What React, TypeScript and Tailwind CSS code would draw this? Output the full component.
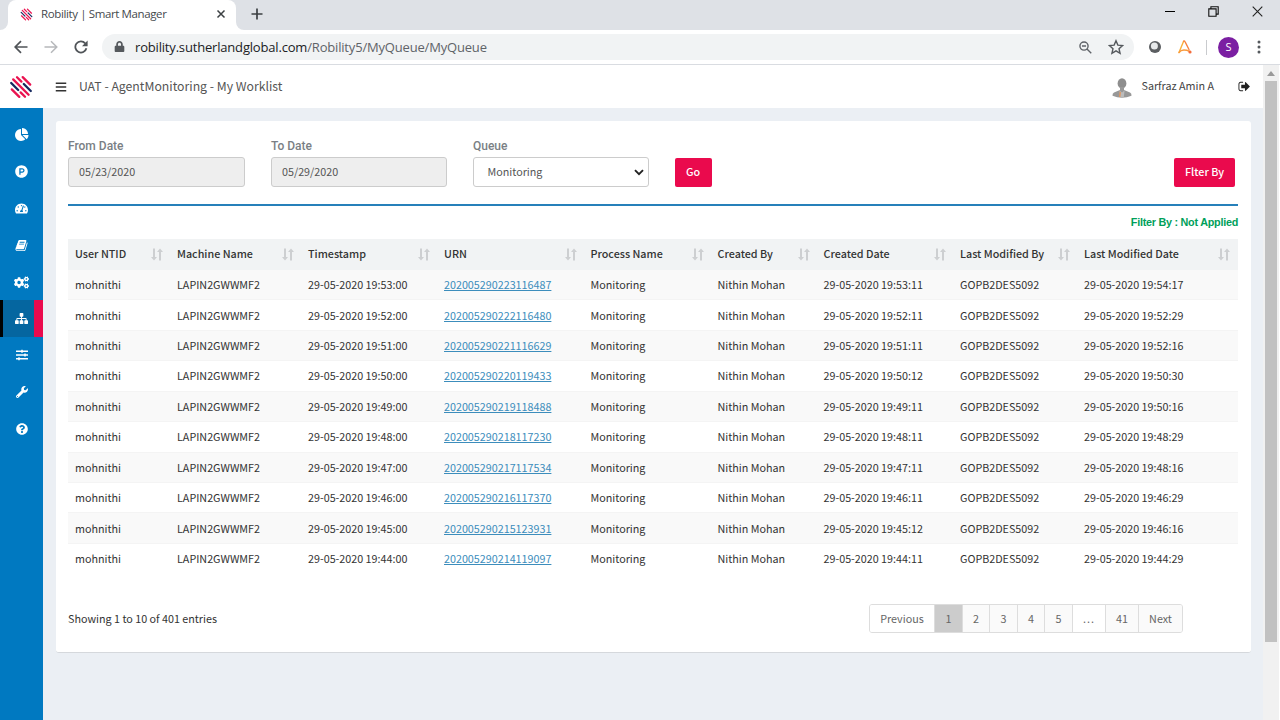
import { clsx } from "clsx";
import {
  FaBars,
  FaCogs,
  FaLock,
  FaProductHunt,
  FaQuestionCircle,
  FaSlidersH,
  FaTachometerAlt,
  FaWrench,
} from "react-icons/fa";

const PIE =
  "M768 890l546 546q-106 108-247.5 168t-298.5 60q-209 0-385.5-103t-279.5-279.5-103-385.5 103-385.5 279.5-279.5 385.5-103v762zm187 6h773q0 157-60 298.5t-168 247.5zm709-128h-768v-768q209 0 385.5 103t279.5 279.5 103 385.5z";
const BOOK =
  "M1703 478q40 57 18 129l-275 906q-19 64-76.5 107.5t-122.5 43.5h-923q-77 0-148.5-53.5t-99.5-131.5q-24-67-2-127 0-4 3-27t4-37q1-8-3-21.5t-3-19.5q2-11 8-21t16.5-23.5 16.5-23.5q23-38 45-91.5t30-91.5q3-10 .5-30t-.5-28q3-11 17-28t17-23q21-36 42-92t25-90q1-9-2.5-32t.5-28q4-13 22-30.5t22-22.5q19-26 42.5-84.5t27.5-96.5q1-8-3-25.5t-2-26.5q2-8 9-18t18-23 17-21q8-12 16.5-30.5t15-35 16-36 19.5-32 26.5-23.5 36-11.5 47.5 5.5l-1 3q38-9 51-9h761q74 0 114 56t18 130l-274 906q-36 119-71.5 153.5t-128.5 34.5h-869q-27 0-38 15-11 16-1 43 24 70 144 70h923q29 0 56-15.5t35-41.5l300-987q7-22 5-57 38 15 59 43zm-1064 2q-4 13 2 22.5t20 9.5h608q13 0 25.5-9.5t16.5-22.5l21-64q4-13-2-22.5t-20-9.5h-608q-13 0-25.5 9.5t-16.5 22.5zm-83 256q-4 13 2 22.5t20 9.5h608q13 0 25.5-9.5t16.5-22.5l21-64q4-13-2-22.5t-20-9.5h-608q-13 0-25.5 9.5t-16.5 22.5z";
const SITEMAP =
  "M1792 1248v320q0 40-28 68t-68 28h-320q-40 0-68-28t-28-68v-320q0-40 28-68t68-28h96v-192h-512v192h96q40 0 68 28t28 68v320q0 40-28 68t-68 28h-320q-40 0-68-28t-28-68v-320q0-40 28-68t68-28h96v-192h-512v192h96q40 0 68 28t28 68v320q0 40-28 68t-68 28h-320q-40 0-68-28t-28-68v-320q0-40 28-68t68-28h96v-192q0-52 38-90t90-38h512v-192h-96q-40 0-68-28t-28-68v-320q0-40 28-68t68-28h320q40 0 68 28t28 68v320q0 40-28 68t-68 28h-96v192h512q52 0 90 38t38 90v192h96q40 0 68 28t28 68z";
const SIGN_OUT =
  "M704 1440q0 4 1 20t.5 26.5-3 23.5-10 19.5-20.5 6.5h-320q-119 0-203.5-84.5t-84.5-203.5v-704q0-119 84.5-203.5t203.5-84.5h320q13 0 22.5 9.5t9.5 22.5q0 4 1 20t.5 26.5-3 23.5-10 19.5-20.5 6.5h-320q-66 0-113 47t-47 113v704q0 66 47 113t113 47h312l11.5 1 11.5 3 8 5.5 7 9 2 13.5zm928-544q0 26-19 45l-544 544q-19 19-45 19t-45-19-19-45v-288h-448q-26 0-45-19t-19-45v-384q0-26 19-45t45-19h448v-288q0-26 19-45t45-19 45 19l544 544q19 19 19 45z";

const Glyph = ({ d, className }: { d: string; className?: string }) => (
  <svg viewBox="0 0 1792 1792" fill="currentColor" className={className}>
    <path d={d} />
  </svg>
);

const columns = [
  "User NTID",
  "Machine Name",
  "Timestamp",
  "URN",
  "Process Name",
  "Created By",
  "Created Date",
  "Last Modified By",
  "Last Modified Date",
];

// [timestamp, urn, created, modified]
const rows = [
  ["19:53:00", "202005290223116487", "19:53:11", "19:54:17"],
  ["19:52:00", "202005290222116480", "19:52:11", "19:52:29"],
  ["19:51:00", "202005290221116629", "19:51:11", "19:52:16"],
  ["19:50:00", "202005290220119433", "19:50:12", "19:50:30"],
  ["19:49:00", "202005290219118488", "19:49:11", "19:50:16"],
  ["19:48:00", "202005290218117230", "19:48:11", "19:48:29"],
  ["19:47:00", "202005290217117534", "19:47:11", "19:48:16"],
  ["19:46:00", "202005290216117370", "19:46:11", "19:46:29"],
  ["19:45:00", "202005290215123931", "19:45:12", "19:46:16"],
  ["19:44:00", "202005290214119097", "19:44:11", "19:44:29"],
];

const gridCols =
  "grid grid-cols-[102px_131px_136px_146.5px_127px_106px_136.5px_124px_160px] items-center";

function Logo({ className }: { className?: string }) {
  return (
    <svg viewBox="0 0 24 24" fill="none" strokeWidth="2.3" strokeLinecap="round" className={className}>
      <path
        stroke="#ea1350"
        d="M13.700 2.100l7.500 7.500M8 2.200l4.400 4.400M4.200 4.400l15.400 15.400M11.600 17.400l4.400 4.400M2.800 14.400l7.500 7.500"
      />
      <path stroke="#16295f" d="M14.800 9l7 7M2.200 8l7 7" />
    </svg>
  );
}

function SortIcon() {
  return (
    <svg viewBox="0 0 12 13" className="mr-[7px] h-[13px] w-3 shrink-0" fill="#cdcfd1">
      <path d="M2 0.5h2v8.600h2L3 12.600 0 9.100h2z" />
      <path d="M8 12.500h2V3.900h2L9 0.400 6 3.900h2z" />
    </svg>
  );
}

function Browser() {
  return (
    <header className="font-['Open_Sans','Noto_Sans',sans-serif]">
      <div className="flex h-[30px] bg-[#dee1e6]">
        <div className="w-2 bg-white">
          <div className="h-full rounded-br-lg bg-[#dee1e6]" />
        </div>
        <div className="flex w-[228px] items-center rounded-t-lg bg-white pr-[10px] pb-[2px] pl-3">
          <Logo className="size-[13px]" />
          <span className="ml-2 text-[11.500px] tracking-[-0.380px] text-[#45494d]">Robility | Smart Manager</span>
          <svg viewBox="0 0 10 10" className="ml-auto size-[10px]" stroke="#3c4043" strokeWidth="1.5">
            <path d="M1.5 1.5l7 7M8.5 1.5l-7 7" />
          </svg>
        </div>
        <div className="w-2 bg-white">
          <div className="h-full rounded-bl-lg bg-[#dee1e6]" />
        </div>
        <svg viewBox="0 0 12 12" className="mt-2 ml-[7px] size-3" stroke="#3c4043" strokeWidth="1.7">
          <path d="M6 0.5v11M0.5 6h11" />
        </svg>
        <div className="ml-auto flex h-[23px] items-center gap-[33px] pr-[17px]">
          <div className="h-px w-[10px] bg-black" />
          <svg viewBox="0 0 11 11" className="size-[11px]" fill="none" stroke="#111" strokeWidth="1.1">
            <path d="M0.8 2.9h7.3v7.3H0.8zM2.9 2.6V0.8h7.3v7.3H8.4" />
          </svg>
          <svg viewBox="0 0 11 11" className="size-[11px]" stroke="#222" strokeWidth="1.1">
            <path d="M0.7 0.7l9.6 9.6M10.3 0.7l-9.6 9.6" />
          </svg>
        </div>
      </div>
      <div className="flex h-[35px] items-center border-b border-[#d9dce1] bg-white pr-[19px] pl-[14px]">
        <svg viewBox="0 0 14 14" className="size-[14px]" fill="none" stroke="#505458" strokeWidth="1.7">
          <path d="M13.5 7H1.5M7 1.2L1.2 7l5.8 5.8" />
        </svg>
        <svg viewBox="0 0 14 14" className="ml-4 size-[14px]" fill="none" stroke="#b6b8bb" strokeWidth="1.5">
          <path d="M0.5 7h12M7 1.2L12.8 7 7 12.8" />
        </svg>
        <svg viewBox="0 0 14 14" className="ml-4 size-[14px]" fill="none" stroke="#505458" strokeWidth="1.8">
          <path d="M12.4 8.3A5.6 5.6 0 1 1 11.2 3.3" />
          <path d="M13.6 0.6v5.6H8z" fill="#505458" stroke="none" />
        </svg>
        <div className="ml-[14px] flex h-[26px] flex-1 items-center rounded-full bg-[#f1f3f4] pr-[10px] pl-3">
          <FaLock className="mb-px size-[11px] text-[#55595d]" />
          <span className="ml-[10px] pt-px text-[13px] tracking-[-0.180px] text-[#202124]">
            robility.sutherlandglobal.com<span className="text-[#5f6368]">/Robility5/MyQueue/MyQueue</span>
          </span>
          <svg viewBox="0 0 14 14" className="ml-auto size-[13px]" fill="none" stroke="#5f6368" strokeWidth="1.5">
            <circle cx="5.4" cy="5.4" r="4.4" />
            <path d="M3.2 5.4h4.4M8.6 8.6l4.600 4.600" />
          </svg>
          <svg viewBox="0 0 24 24" className="ml-4 size-[16px]" fill="none" stroke="#55595d" strokeWidth="2.1">
            <path d="M12 2.6l2.8 6.6 7.1.6-5.4 4.7 1.6 7L12 17.800l-6.100 3.700 1.600-7L2.100 9.800l7.100-.6z" />
          </svg>
        </div>
        <svg viewBox="0 0 12 12" className="ml-[15px] size-3">
          <circle cx="6" cy="6" r="6" fill="#5b5e61" />
          <circle cx="5.4" cy="5" r="3.500" fill="#e8eaeb" />
        </svg>
        <svg viewBox="0 0 14 14" className="ml-[17px] size-[14px]" fill="none" strokeWidth="1.4" strokeLinecap="round">
          <path d="M1 12.500L5.600 1.200" stroke="#fbb03b" />
          <path d="M5.600 1.200Q6.600 0.500 7.200 2L11 9.500" stroke="#f7803c" />
          <path d="M1 12.500Q4 8.200 12 11.500" stroke="#f99a3d" />
          <circle cx="12" cy="12" r="1.600" fill="#f36c3d" />
        </svg>
        <div className="ml-[14px] h-[15px] w-px bg-[#c9cbce]" />
        <div className="ml-[11px] flex size-[21px] items-center justify-center rounded-full bg-[#7b1fa2] text-[11px] text-white">
          S
        </div>
        <svg viewBox="0 0 4 14" className="ml-[18px] h-[14px] w-1" fill="#55595d">
          <circle cx="2" cy="2" r="1.500" />
          <circle cx="2" cy="7" r="1.500" />
          <circle cx="2" cy="12" r="1.500" />
        </svg>
      </div>
    </header>
  );
}

function Topbar() {
  return (
    <div className="flex h-[43px] items-center bg-white pr-[12px] pl-[9px]">
      <Logo className="size-6" />
      <FaBars className="ml-[22px] size-3 text-[#333]" />
      <span className="ml-3 text-[12.250px] text-[#555]">UAT - AgentMonitoring - My Worklist</span>
      <svg viewBox="0 0 20 20" className="mt-[2px] ml-auto size-5">
        <ellipse cx="10" cy="5.400" rx="4.400" ry="5.200" fill="#8e8e8e" />
        <path d="M8 9h4v3l6 2.400q1.800 1 1.500 3.300Q15 19.800 10 19.800T0.500 17.700Q0.300 15.300 2 14.400L8 12z" fill="#989898" />
        <path d="M7.400 12.400L10 14.500l2.600-2.100-.8 6.800H8.200z" fill="#bbb" />
        <path d="M7.600 13.500l1.400.8-.6 4.800H7z" fill="#e0955f" />
      </svg>
      <span className="ml-[9px] text-[10.750px] text-[#444]">Sarfraz Amin A</span>
      <Glyph d={SIGN_OUT} className="ml-[24px] size-[13px] text-[#222]" />
    </div>
  );
}

function Sidebar() {
  const items = [
    <Glyph d={PIE} className="size-[14px]" />,
    <FaProductHunt />,
    <FaTachometerAlt />,
    <Glyph d={BOOK} className="size-[13px]" />,
    <FaCogs className="size-[15px]" />,
    <Glyph d={SITEMAP} className="size-[13px]" />,
    <FaSlidersH className="size-[12px]" />,
    <FaWrench className="size-[12px]" />,
    <FaQuestionCircle className="size-[12px]" />,
  ];
  return (
    <nav className="w-[43px] shrink-0 bg-[#0079c1] pt-[8px] text-[13px] text-white">
      {items.map((icon, i) => (
        <div
          key={i}
          className={clsx(
            "flex h-[36.800px] items-center justify-center",
            i < 6 && "pt-px",
            i === 5 && "border-r-[9px] border-l-[3px] border-l-black border-r-[#ea0a4d] bg-[#0566a0] pl-1.5"
          )}
        >
          {icon}
        </div>
      ))}
    </nav>
  );
}

function Filters() {
  const label = "mb-[3px] block font-['Roboto',sans-serif] text-[12px] leading-4 font-medium text-[#7a7f85]";
  const field = "flex h-[30px] items-center rounded-[3px] border border-[#ccc] text-[10.750px] text-[#555]";
  const button = "h-[29px] rounded-[2px] bg-[#ea0a4d] text-[10.750px] font-medium text-white";
  return (
    <div className="flex h-[85px] items-end border-b-2 border-[#2680ba] pb-[17px]">
      <div className="w-[177px]">
        <span className={label}>From Date</span>
        <div className={clsx(field, "bg-[#eee] pl-[10px]")}>05/23/2020</div>
      </div>
      <div className="ml-[26px] w-[176px]">
        <span className={label}>To Date</span>
        <div className={clsx(field, "bg-[#eee] pl-[10px]")}>05/29/2020</div>
      </div>
      <div className="ml-[26px] w-[176px]">
        <span className={label}>Queue</span>
        <div className={clsx(field, "justify-between bg-white pr-1 pl-[13.500px]")}>
          Monitoring
          <svg viewBox="0 0 10 7" className="h-[7px] w-[10px]" fill="none" stroke="#222" strokeWidth="1.900">
            <path d="M1 1.200l4 4 4-4" />
          </svg>
        </div>
      </div>
      <button className={clsx(button, "ml-[25.500px] w-[37px]")}>Go</button>
      <button className={clsx(button, "mr-[3px] ml-auto w-[61px]")}>Flter By</button>
    </div>
  );
}

function WorkTable() {
  return (
    <div className="text-[10.750px] text-[#333]">
      <div className={clsx(gridCols, "h-[31px] bg-[#f1f3f4] font-medium")}>
        {columns.map((name) => (
          <div key={name} className="flex items-center justify-between pl-[7px] whitespace-nowrap">
            {name}
            <SortIcon />
          </div>
        ))}
      </div>
      {rows.map(([time, urn, created, modified], i) => (
        <div
          key={urn}
          className={clsx(
            gridCols,
            "h-[30.430px] border-b pt-px *:pl-[7px]",
            i % 2 === 0 && "bg-[#f9f9f9]",
            i === 9 ? "border-transparent" : "border-[#f4f4f4]"
          )}
        >
          <div>mohnithi</div>
          <div>LAPIN2GWWMF2</div>
          <div>29-05-2020 {time}</div>
          <div>
            <a className="text-[#3c8dbc] underline">{urn}</a>
          </div>
          <div>Monitoring</div>
          <div>Nithin Mohan</div>
          <div>29-05-2020 {created}</div>
          <div>GOPB2DES5092</div>
          <div>29-05-2020 {modified}</div>
        </div>
      ))}
    </div>
  );
}

function Pagination() {
  const pages = [
    { text: "Previous", style: "w-[64px] bg-white" },
    { text: "1", style: "w-[28px] bg-[#ccc]" },
    { text: "2", style: "w-[27px] bg-[#fafafa]" },
    { text: "3", style: "w-[28px] bg-[#fafafa]" },
    { text: "4", style: "w-[27px] bg-[#fafafa]" },
    { text: "5", style: "w-[28px] bg-[#fafafa]" },
    { text: "...", style: "w-[33px] bg-white tracking-[1px]" },
    { text: "41", style: "w-[33px] bg-[#fafafa]" },
    { text: "Next", style: "w-[44px] bg-[#fafafa]" },
  ];
  return (
    <div className="flex h-[29px] overflow-hidden rounded-[3px] border border-[#ddd] text-[10.750px] text-[#666]">
      {pages.map((page, i) => (
        <div key={page.text} className={clsx("flex items-center justify-center pt-px", page.style, i > 0 && "border-l border-[#ddd]")}>
          {page.text}
        </div>
      ))}
    </div>
  );
}

export default function App() {
  return (
    <div className="flex h-[720px] w-[1280px] flex-col overflow-hidden bg-white font-['Noto_Sans_CJK_SC',sans-serif]">
      <Browser />
      <div className="flex min-h-0 flex-1 pr-px">
        <div className="flex min-w-0 flex-1 flex-col">
          <Topbar />
          <div className="flex flex-1">
            <Sidebar />
            <main className="flex-1 bg-[#ebeff4] pt-[13px] pl-[13px]">
              <div className="h-[532px] w-[1195px] rounded-[3px] border-b border-[#d5d8dc] bg-white pr-[13px] pl-3">
                <Filters />
                <p className="flex h-[33px] items-center justify-end font-['Liberation_Sans',sans-serif] text-[10.800px] tracking-[-0.250px] font-bold text-[#00a05a]">
                  Filter By : Not Applied
                </p>
                <WorkTable />
                <div className="mt-[30px] flex items-center justify-between pr-[55px]">
                  <span className="pt-px text-[10.750px] text-[#333]">Showing 1 to 10 of 401 entries</span>
                  <Pagination />
                </div>
              </div>
            </main>
          </div>
        </div>
        <div className="flex w-4 flex-col items-center bg-[#f1f1f1]">
          <svg viewBox="0 0 8 5" className="mt-[6px] h-[5px] w-2" fill="#9a9a9a">
            <path d="M4 0l4 5H0z" />
          </svg>
          <div className="mt-[5px] h-[561px] w-3 bg-[#c1c1c1]" />
        </div>
      </div>
    </div>
  );
}
